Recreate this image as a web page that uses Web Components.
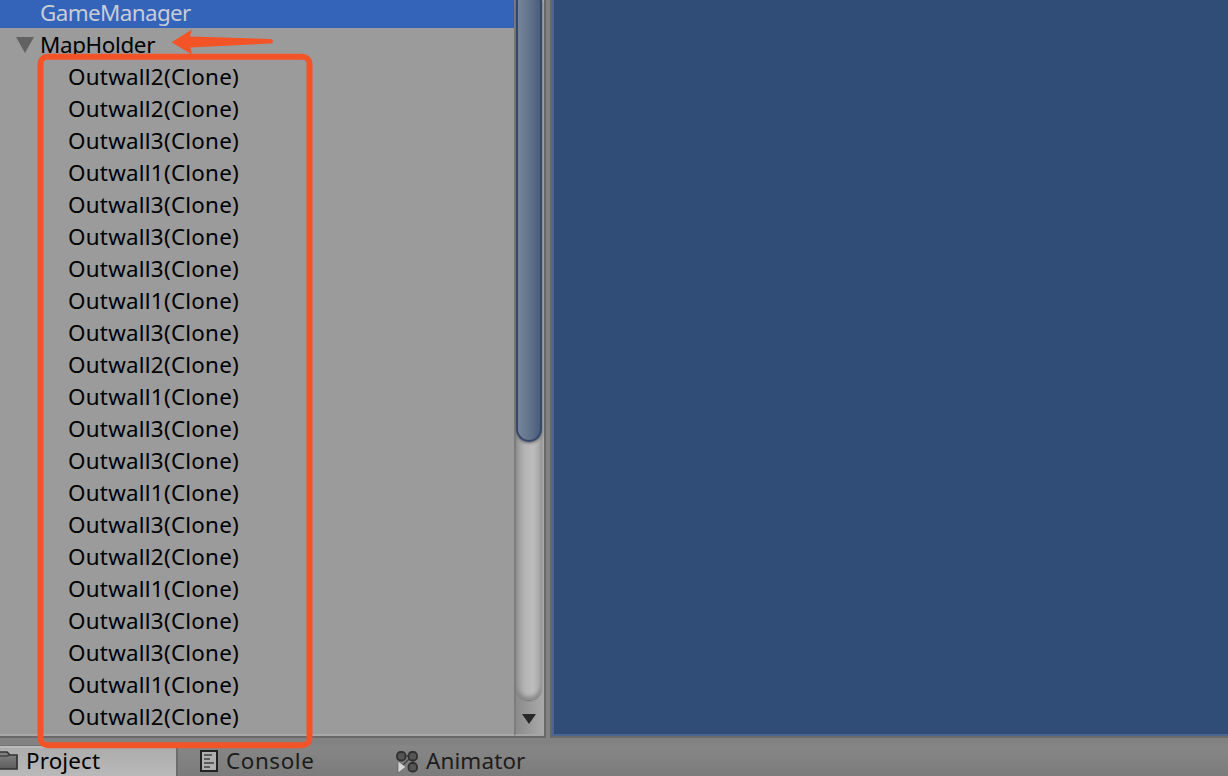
<!DOCTYPE html>
<html lang="en"><head><meta charset="utf-8"><title>Hierarchy</title>
<style>html,body{margin:0;height:100%;overflow:hidden;background:#828282}</style></head>
<body><editor-window></editor-window>
<script>
const define=(name,html,init)=>customElements.define(name,class extends HTMLElement{
  constructor(){super();this.attachShadow({mode:'open'}).innerHTML=html}
  connectedCallback(){if(init)init(this,this.shadowRoot)}
});
define('tree-row',`<style>
:host{display:flex;flex:none;height:32px;align-items:center;padding-left:68px;color:#000;box-sizing:border-box;letter-spacing:.25px;white-space:nowrap;line-height:32px}
:host([selected]){height:28px;line-height:26px;padding:0 0 3px 40px;background:#3364ba;color:#c8ccd6;letter-spacing:-.6px}
:host([open]){padding-left:16px;letter-spacing:-.35px}
svg{display:none;width:18px;height:16px;margin:2px 6px 0 0}
:host([open]) svg{display:block}
:host(:not([selected])) span{padding-top:2px}
</style><svg viewBox="0 0 18 16"><path d="M0 0H18L9 16Z" fill="#626262"/></svg><span><slot></slot></span>`);
define('scroll-bar',`<style>
:host{display:flex;flex-direction:column;width:30px;height:736px;box-sizing:border-box;border-left:2px solid #7d7d7d;border-right:2px solid #a9a9a9;border-bottom:2px solid #a5a5a5;background:linear-gradient(90deg,#8b8b8b,#a8a8a8)}
.track{height:700px;border-radius:0 0 13px 13px;background:linear-gradient(90deg,#969696,#b5b5b5 35%,#bdbdbd 65%,#a3a3a3);box-shadow:inset 0 -3px 4px #858585,0 1px 1px #777}
.thumb{height:442px;box-sizing:border-box;border:2px solid #35486a;border-top:0;border-radius:0 0 13px 13px;background:linear-gradient(90deg,#75859a,#64758d 45%,#4a5d7b);box-shadow:0 1px 3px #626262}
.end{flex:1;display:flex;justify-content:center;padding-top:13px}svg{width:14px;height:11px}
</style><div class="track"><div class="thumb"></div></div><div class="end"><svg viewBox="0 0 14 11"><path d="M0 1H14L7 11Z" fill="#282828"/></svg></div>`);
define('hierarchy-panel',`<style>
:host{display:flex;width:544px;height:736px;border-right:2px solid #696969;border-bottom:2px solid #696969;background:#9b9b9b}
.list{display:flex;flex-direction:column;width:514px;height:734px;border-bottom:2px solid #a8a8a8}
</style><div class="list"></div><scroll-bar></scroll-bar>`,(h,r)=>{
 r.querySelector('.list').innerHTML='<tree-row selected>GameManager</tree-row><tree-row open>MapHolder</tree-row>'+[...'223133313213313213312'].map(n=>`<tree-row>Outwall${n}(Clone)</tree-row>`).join('');
});
define('scene-view',`<style>:host{display:block;flex:1;height:734px;margin-left:4px;border-left:2px solid #686868;border-bottom:2px solid #6a6a6a;padding:0 0 2px 2px;background:#304d78 padding-box;box-shadow:inset 2px -2px #4a6590}</style>`);
define('tab-item',`<style>
:host{display:flex;align-items:center;box-sizing:border-box;height:32px;color:#1c1c1c;white-space:nowrap;letter-spacing:.6px}
:host([active]){height:30px;margin-top:2px;padding-bottom:4px;color:#000;background:linear-gradient(#acacac,#b9b9b9);border-top:2px solid #bababa;border-right:2px solid #6c6c6c;box-shadow:0 -1px #747474;letter-spacing:.15px}
::slotted(svg){flex:none}
</style><slot></slot>`);
define('tab-bar',`<style>
:host{display:flex;height:32px;padding-top:6px;background:linear-gradient(#828282 6px,#868686 8px,#7c7c7c)}
.p{width:178px}.c{width:218px;padding-left:22px}.a{width:200px;letter-spacing:.15px}
svg{display:block;margin-top:2px}
span{margin-left:8px}
</style>
<tab-item active class="p"><svg width="18" height="20" viewBox="0 0 18 20"><defs><linearGradient id="f" x2="0" y2="1"><stop stop-color="#858585"/><stop offset="1" stop-color="#5c5c5c"/></linearGradient></defs><path d="M0 1H7L10 4H17V18H0" fill="url(#f)" stroke="#333" stroke-width="1.700"/><path d="M0 5H7L10 4" fill="none" stroke="#444" stroke-width="1.5"/></svg><span>Project</span></tab-item>
<tab-item class="c"><svg width="18" height="22" viewBox="0 0 18 22"><path d="M1 1H17V21H1Z" fill="#b0b0b0" stroke="#222" stroke-width="2"/><path d="M4 5H12M4 9H10M4 13H14M4 17H10" stroke="#5c5c5c" stroke-width="2"/></svg><span>Console</span></tab-item>
<tab-item class="a"><svg width="22" height="24" viewBox="0 0 22 24"><path d="M5 7H17V18M16 7L5 18" stroke="#484848" stroke-width="1.700" fill="none"/><g fill="#555" stroke="#303030" stroke-width="1.800"><rect x="1" y="3" width="8.500" height="8.500" rx="3.500"/><rect x="12.500" y="3" width="8.500" height="8.500" rx="3.500"/><rect x="12.500" y="14" width="8.500" height="8.500" rx="3.500"/></g><path d="M2 12L10 18L2 24Z" fill="#d6d6d6" stroke="#606060" stroke-width=".7"/></svg><span>Animator</span></tab-item>`);
define('mark-overlay',`<style>:host{position:absolute;left:0;top:0;pointer-events:none}svg{display:block}</style>
<svg width="330" height="776"><rect x="40.5" y="56.8" width="269" height="688.5" rx="7" fill="none" stroke="#f35427" stroke-width="6"/><path d="M171.5 42.300L192 29.500L190 36.500L271 39Q273 39.300 273 41.300T271 43.500L190.500 47.500L192 54.500Z" fill="#f35427"/></svg>`);
define('editor-window',`<style>
:host{display:block;position:relative;width:1228px;height:776px;overflow:hidden;background:#828282;font:22.4px "Noto Sans","Open Sans",sans-serif}
.main{display:flex;height:738px}
</style><div class="main"><hierarchy-panel></hierarchy-panel><scene-view></scene-view></div><tab-bar></tab-bar><mark-overlay></mark-overlay>`);
</script></body></html>
